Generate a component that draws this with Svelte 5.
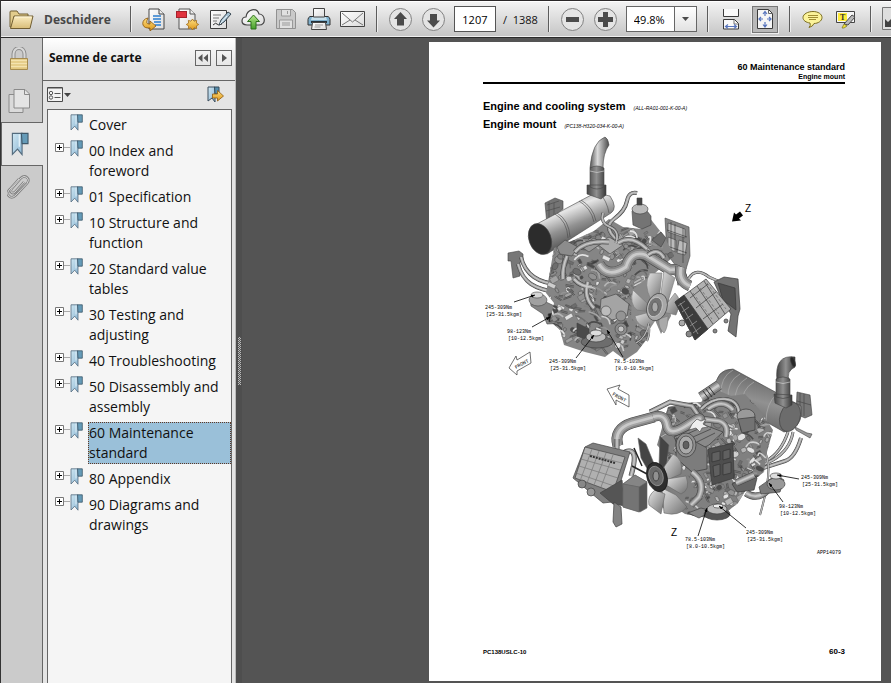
<script lang="ts">
  let currentPage = $state('1207');
  let zoomLevel = $state('49.8%');
  let selected = $state('60 Maintenance standard');

  const bookmarks = [
    { title: 'Cover', leaf: true },
    { title: '00 Index and foreword' },
    { title: '01 Specification' },
    { title: '10 Structure and function' },
    { title: '20 Standard value tables' },
    { title: '30 Testing and adjusting' },
    { title: '40 Troubleshooting' },
    { title: '50 Disassembly and assembly' },
    { title: '60 Maintenance standard' },
    { title: '80 Appendix' },
    { title: '90 Diagrams and drawings' }
  ];

  // Torque callouts: text position, then the leader line
  const callouts = [
    { x: 485, y: 309, nm: '245-309Nm', kgm: '[25-31.5kgm]', line: [514, 302, 535, 295] },
    { x: 507, y: 333, nm: '98-123Nm', kgm: '[10-12.5kgm]', line: [532, 327, 550, 317] },
    { x: 549, y: 363, nm: '245-309Nm', kgm: '[25-31.5kgm]', line: [576, 358, 594, 335] },
    { x: 614, y: 363, nm: '78.5-103Nm', kgm: '[8.0-10.5kgm]', line: [623, 357, 607, 330] },
    { x: 801, y: 479, nm: '245-309Nm', kgm: '[25-31.5kgm]', line: [799, 479, 777, 475] },
    { x: 779, y: 508, nm: '98-123Nm', kgm: '[10-12.5kgm]', line: [783, 502, 769, 483] },
    { x: 746, y: 534, nm: '245-309Nm', kgm: '[25-31.5kgm]', line: [746, 528, 719, 506] },
    { x: 685, y: 541, nm: '78.5-103Nm', kgm: '[8.0-10.5kgm]', line: [698, 536, 707, 508] }
  ];

  // Small castings, pipes and bolts that fill an engine block.
  // Seeded so that the drawing is the same on every load.
  function makeParts(seed: number, x0: number, y0: number, w: number, h: number, count: number) {
    const rnd = () => {
      seed = (seed * 16807) % 2147483647;
      return seed / 2147483647;
    };
    const tones = ['#4c4c4c', '#6d6d6d', '#808080', '#929292', '#a3a3a3', '#b5b5b5', '#cecece', '#e2e2e2'];
    return Array.from({ length: count }, () => ({
      kind: Math.floor(rnd() * 4),
      x: x0 + rnd() * w,
      y: y0 + rnd() * h,
      a: 2 + rnd() * 7,
      b: 1 + rnd() * 5,
      turn: rnd() > 0.5 ? 25 : -30,
      fill: tones[Math.floor(rnd() * tones.length)]
    }));
  }

  const upperParts = makeParts(4127, 546, 230, 128, 118, 400);
  const lowerParts = makeParts(9731, 660, 398, 112, 120, 360);
</script>

{#snippet bookmarkIcon(width: number, height: number)}
  <svg {width} {height} viewBox="0 0 13 17">
    <path d="M1 .8h7v15.4l-3.3-4L1 16z" fill="url(#bookmarkBlue)" stroke="#536b7d" stroke-width=".8" />
    <path d="M7.5.8h4.8v7.4H8z" fill="#659bb8" stroke="#3e586a" stroke-width=".8" />
    <path d="M6 1.500v9" stroke="#e0f0f8" />
  </svg>
{/snippet}

{#snippet engineParts(parts: ReturnType<typeof makeParts>)}
  {#each parts as p}
    <g transform="translate({p.x} {p.y}) rotate({p.turn})">
      {#if p.kind === 0}
        <rect width={p.a} height={p.b} fill={p.fill} stroke="#555" stroke-width=".4" />
      {:else if p.kind === 1}
        <ellipse rx={p.a / 2} ry={p.b / 1.6} fill={p.fill} stroke="#4c4c4c" stroke-width=".5" />
      {:else if p.kind === 2}
        <path d="M0 0q{p.a} {-p.b} {p.a * 1.6} {p.b}" fill="none" stroke={p.fill} stroke-width="1.6" />
      {:else}
        <path d="M0 0l{p.a} {p.b}M1 -1l{p.a} {p.b}" stroke="#3a3a3a" stroke-width=".5" />
      {/if}
    </g>
  {/each}
{/snippet}

{#snippet pipe(d: string, size: number)}
  <path {d} fill="none" stroke="#444" stroke-width={size} />
  <path {d} fill="none" stroke="#858585" stroke-width={size - 1} />
  <path {d} fill="none" stroke="#a5a5a5" stroke-width={size / 1.8} />
  <path {d} fill="none" stroke="#cacaca" stroke-width={size / 4} />
{/snippet}

<!-- Shared gradients -->
<svg class="defs" width="0" height="0" aria-hidden="true">
  <defs>
    <linearGradient id="bookmarkBlue" x2="1" y2="1">
      <stop offset="0" stop-color="#cfe7f2" /><stop offset="1" stop-color="#8db7d4" />
    </linearGradient>
    <linearGradient id="manila" x2="0" y2="1">
      <stop offset="0" stop-color="#fbedc1" /><stop offset="1" stop-color="#d8bd78" />
    </linearGradient>
    <linearGradient id="paper" x2="1" y2="1">
      <stop offset="0" stop-color="#fff" /><stop offset="1" stop-color="#dcdcdc" />
    </linearGradient>
    <linearGradient id="gold" x2="0" y2="1">
      <stop offset="0" stop-color="#ffdf80" /><stop offset="1" stop-color="#dc9618" />
    </linearGradient>
    <linearGradient id="leaf" x2="0" y2="1">
      <stop offset="0" stop-color="#b4e889" /><stop offset="1" stop-color="#45a02a" />
    </linearGradient>
  </defs>
</svg>

<div class="app">
  <header class="toolbar">
    <button class="open">
      <svg width="25" height="21" viewBox="0 0 25 21">
        <path d="M1 18V3q0-1 1-1h6l2 3h9v13z" fill="#e2cc8c" stroke="#715e32" />
        <path d="M1.500 19.500L5 7h19l-3 12.500z" fill="url(#manila)" stroke="#715e32" />
        <path d="M6 8h16.500" stroke="#fff7d8" />
      </svg>
      <span>Deschidere</span>
    </button>
    <span class="sep"></span>

    <div class="group">
      <button class="tool" aria-label="Export">
        <svg width="24" height="24" viewBox="0 0 24 24">
          <path d="M7 2h10l5 5v15H7z" fill="url(#paper)" stroke="#444" />
          <path d="M17 2v5h5" fill="#eee" stroke="#444" />
          <path d="M11 9h8M11 12h8M12 15h7M13 18h6" stroke="#2d7fd0" stroke-width="1.300" />
          <path d="M6 11C-1 12-1 21 6 21h2v3l6-5-6-5v3H7q-4 0-1-6z" fill="url(#gold)" stroke="#89560f" stroke-width=".8" />
        </svg>
      </button>
      <button class="tool" aria-label="Create PDF">
        <svg width="24" height="24" viewBox="0 0 24 24">
          <path d="M4 2h11l5 5v15H4z" fill="url(#paper)" stroke="#555" />
          <path d="M15 2v5h5" fill="#eee" stroke="#555" />
          <rect x="1.500" y="4.500" width="10" height="6" fill="#e0323e" stroke="#a5222c" />
          <path d="M17.500 12l1.500 2.200 2.600-.8-.2 2.700 2.300 1.400-2.300 1.400.2 2.700-2.600-.8-1.500 2.200-1.500-2.200-2.600.8.2-2.700-2.300-1.400 2.300-1.400-.2-2.700 2.600.8z" fill="url(#gold)" stroke="#a16b17" stroke-width=".8" />
        </svg>
      </button>
      <button class="tool" aria-label="Sign">
        <svg width="24" height="24" viewBox="0 0 24 24">
          <path d="M2.500 3.500h16v18h-16z" fill="url(#paper)" stroke="#3d3d3d" />
          <path d="M5 8h8M5 11h6M5 14h4" stroke="#777" />
          <path d="M5 18q3-3 4-1t5 0" fill="none" stroke="#333" />
          <path d="M11 18l2-5 7-8 3 2-7 8z" fill="#a9c4d5" stroke="#384853" />
          <path d="M12 17l7-8" stroke="#edf6fb" />
        </svg>
      </button>
      <button class="tool" aria-label="Upload">
        <svg width="25" height="24" viewBox="0 0 25 24">
          <path d="M6 18C-1 18 0 10 5 10 6 2 16 0 18 7c6 0 8 11 0 11z" fill="url(#paper)" stroke="#444" stroke-width="1.200" />
          <path d="M12.500 8l6 6.500h-3.500V22h-5v-7.500H6.500z" fill="url(#leaf)" stroke="#2c6e1c" />
        </svg>
      </button>
      <button class="tool" aria-label="Save" disabled>
        <svg width="22" height="24" viewBox="0 0 22 24">
          <path d="M1.500 2.500h16l3 3v16h-19z" fill="#c9c9c9" stroke="#919191" />
          <path d="M6.500 3v6h9V3M4.500 21v-8h13v8" fill="#e0e0e0" stroke="#999" />
          <path d="M12.500 4v3M7 16h8M7 18h8" stroke="#999" />
        </svg>
      </button>
      <button class="tool" aria-label="Print">
        <svg width="24" height="24" viewBox="0 0 24 24">
          <path d="M3 9.500h18q2 1 2 3V18H1v-5.500q0-2 2-3z" fill="#7fb0cd" stroke="#333" />
          <path d="M5 10h14l1 3H4z" fill="#c6dfeb" />
          <path d="M6.500 1.500h11V10h-11z" fill="url(#paper)" stroke="#444" />
          <path d="M4 14h16v2H4z" fill="#26323a" />
          <path d="M5.500 15.500h13l1 7h-15z" fill="url(#paper)" stroke="#444" />
          <path d="M8 18h8M7.500 20h6" stroke="#999" />
        </svg>
      </button>
      <button class="tool" aria-label="E-mail">
        <svg width="25" height="24" viewBox="0 0 25 24">
          <path d="M.500 4.500h24v15H.500z" fill="url(#paper)" stroke="#444" />
          <path d="M2 6l10.500 9L23 6M2 18l8-5M23 18l-8-5" fill="none" stroke="#777" />
        </svg>
      </button>
    </div>
    <span class="sep"></span>

    <div class="group">
      <button class="tool" aria-label="Previous page">
        <svg width="25" height="25" viewBox="0 0 25 25">
          <circle cx="12.500" cy="12.500" r="11" fill="#e4e4e4" stroke="#828282" />
          <path d="M12.500 5l6.500 7h-3v6.500H9V12H6z" fill="#4b4b4b" />
        </svg>
      </button>
      <button class="tool" aria-label="Next page">
        <svg width="25" height="25" viewBox="0 0 25 25">
          <circle cx="12.500" cy="12.500" r="11" fill="#e4e4e4" stroke="#828282" />
          <path d="M12.500 20.500L6 13.500h3V7h7v6.500h3z" fill="#4b4b4b" />
        </svg>
      </button>
      <input class="page-no" type="text" aria-label="Page" bind:value={currentPage} />
      <span class="page-total">/&nbsp; 1388</span>
    </div>
    <span class="sep"></span>

    <div class="group">
      <button class="tool" aria-label="Zoom out">
        <svg width="25" height="25" viewBox="0 0 25 25">
          <circle cx="12.500" cy="12.500" r="11" fill="#e4e4e4" stroke="#828282" />
          <path d="M6 10h13v5H6z" fill="#4b4b4b" />
        </svg>
      </button>
      <button class="tool" aria-label="Zoom in">
        <svg width="25" height="25" viewBox="0 0 25 25">
          <circle cx="12.500" cy="12.500" r="11" fill="#e4e4e4" stroke="#828282" />
          <path d="M5 10h5V5h5v5h5v5h-5v5h-5v-5H5z" fill="#4b4b4b" />
        </svg>
      </button>
      <label class="zoom">
        <select aria-label="Zoom level" bind:value={zoomLevel}>
          <option>49.8%</option>
          <option>75%</option>
          <option>100%</option>
        </select>
        <svg width="22" height="24" viewBox="0 0 22 24">
          <path d="M.500 0v24" stroke="#666" />
          <path d="M8 10h7l-3.500 4z" fill="#4b4b4b" />
        </svg>
      </label>
    </div>
    <span class="sep"></span>

    <div class="group">
      <button class="tool" aria-label="Fit width">
        <svg width="20" height="22" viewBox="0 0 20 22">
          <path d="M2.500 1v7.500h15V1M2.500 21V11.500h11l4 4V21z" fill="#fafafa" stroke="#3b3b3b" />
          <path d="M13 12v4h4" fill="none" stroke="#777" />
          <path d="M5 18.500h10M7 16.500l-2.500 2 2.500 2M13 16.500l2.500 2-2.500 2" fill="none" stroke="#5875bd" stroke-width="1.200" />
        </svg>
      </button>
      <button class="tool pressed" aria-label="Fit page">
        <svg width="20" height="22" viewBox="0 0 20 22">
          <path d="M2.500 1.500h11l4 4v15h-15z" fill="#f5f5f5" stroke="#3b3b3b" />
          <path d="M13.500 2v3.500h4" fill="none" stroke="#666" />
          <path d="M4 11h4M12 11h4M10 3.500v4.500M10 14v5M6 9l-2 2 2 2M14 9l2 2-2 2M8 6l2-2.500L12 6M8 16.500l2 2.500 2-2.500" fill="none" stroke="#5875bd" stroke-width="1.200" />
        </svg>
      </button>
    </div>
    <span class="sep"></span>

    <div class="group">
      <button class="tool" aria-label="Comment">
        <svg width="22" height="22" viewBox="0 0 22 22">
          <path d="M11 3.500c5 0 9 2.500 9 6s-4 6-8 6q-1 3-5 4 2-2 1-4.500c-4-.5-7-2.500-7-5.500 0-3.500 5-6 10-6z" fill="#fbf39a" stroke="#7b6d20" />
          <path d="M6 7.500h10M6 9.500h10M7 11.500h7" stroke="#a18e33" />
        </svg>
      </button>
      <button class="tool" aria-label="Highlight text">
        <svg width="22" height="22" viewBox="0 0 22 22">
          <path d="M1.500 3.500h18v11h-18z" fill="#f5f5f5" stroke="#444" />
          <path d="M3 5h9v8H3z" fill="#ffec3b" />
          <text class="mark" x="5" y="12">T</text>
          <path d="M9 16l8-9 3 2-7 8z" fill="#b8b8b8" stroke="#4a4a4a" />
          <path d="M7 20l2-4 3 2-3 2z" fill="#f5e339" stroke="#77701c" stroke-width=".7" />
        </svg>
      </button>
    </div>
    <span class="sep"></span>
    <button class="tool full" aria-label="Full screen">
      <svg width="30" height="24" viewBox="0 0 30 24">
        <path d="M.500.500h29v22H.500z" fill="#dedede" stroke="#777" />
        <path d="M3 20v-8l3 3 3-3 3 3-3 3 3 2z" fill="#424242" />
        <path d="M13 10l4-5h7v7" fill="none" stroke="#424242" stroke-width="2" />
      </svg>
    </button>
  </header>

  <div class="workspace">
    <nav class="rail" aria-label="Panels">
      <button aria-label="Security">
        <svg width="20" height="24" viewBox="0 0 20 24">
          <path d="M4.500 12V7a5.500 6 0 0 1 11 0v5" fill="none" stroke="#8e8e8e" stroke-width="4" />
          <path d="M4.500 12V7a5.500 6 0 0 1 11 0v5" fill="none" stroke="#d8d8d8" stroke-width="2" />
          <path d="M1.500 11.500h17v11h-17z" fill="#e2c77f" stroke="#a58b50" />
          <path d="M2 13.500h16M2 16.500h16M2 19.500h16" stroke="#f4e3af" stroke-width="1.500" />
        </svg>
      </button>
      <button aria-label="Page thumbnails">
        <svg width="22" height="24" viewBox="0 0 22 24">
          <path d="M1 5.500h14v18H1z" fill="#dadada" stroke="#8a8a8a" />
          <path d="M6 .500h11l4.500 4.500v14H6z" fill="#e4e4e4" stroke="#8a8a8a" />
          <path d="M16.500 1v4.500h5" fill="none" stroke="#8a8a8a" />
        </svg>
      </button>
      <button class="active" aria-label="Bookmarks">
        {@render bookmarkIcon(18, 24)}
      </button>
      <button aria-label="Attachments">
        <svg width="24" height="26" viewBox="0 0 24 26">
          <path d="M17 8L8 18q-2 2-3.500.5t0-3.500L14 4q3-3 6-.5t0 6L9 21q-4 4-7 1t1-7l9-10" fill="none" stroke="#848484" stroke-width="2.600" />
          <path d="M17 8L8 18q-2 2-3.500.5t0-3.500L14 4q3-3 6-.5t0 6L9 21q-4 4-7 1t1-7l9-10" fill="none" stroke="#d5d5d5" stroke-width="1" />
        </svg>
      </button>
    </nav>

    <aside class="panel">
      <div class="panel-head">
        <h2>Semne de carte</h2>
        <button aria-label="Collapse panel">
          <svg width="10" height="8" viewBox="0 0 10 8"><path d="M4.500 0v8L0 4zM10 0v8L5.500 4z" fill="#555" /></svg>
        </button>
        <button aria-label="Expand panel">
          <svg width="10" height="8" viewBox="0 0 10 8"><path d="M3 0v8l5-4z" fill="#555" /></svg>
        </button>
      </div>
      <div class="panel-tools">
        <button aria-label="Options">
          <svg width="24" height="15" viewBox="0 0 24 15">
            <path d="M.500.500h15v14H.500z" fill="#f2f2f2" stroke="#4b4b4b" />
            <path d="M1 1.500h14" stroke="#a0a0a0" />
            <circle cx="4" cy="6" r="1.700" fill="none" stroke="#555" />
            <circle cx="4" cy="10.500" r="1.700" fill="none" stroke="#555" />
            <path d="M7.500 6.500h6M7.500 10.500h6" stroke="#555" />
            <path d="M17 6h7l-3.500 4z" fill="#444" />
          </svg>
        </button>
        <button aria-label="Find current bookmark">
          <svg width="17" height="17" viewBox="0 0 17 17">
            <path d="M1 1h7v15l-3-4-4 3z" fill="url(#bookmarkBlue)" stroke="#3d4f5e" />
            <path d="M7.500 1H12v7H8z" fill="#568dab" stroke="#344b5b" />
            <path d="M5.500 8h5V4.500l6 5.500-6 5v-3h-5z" fill="url(#gold)" stroke="#8e5a10" stroke-width=".8" />
          </svg>
        </button>
      </div>
      <ul class="tree">
        {#each bookmarks as item}
          <li>
            <span class="branch">
              {#if !item.leaf}
                <button class="expander" aria-label="Expand {item.title}">
                  <svg width="9" height="9" viewBox="0 0 9 9">
                    <path d="M.500.500h8v8h-8z" fill="#fff" stroke="#777" />
                    <path d="M2 4.500h5M4.500 2v5" stroke="#000" />
                  </svg>
                </button>
              {/if}
            </span>
            {@render bookmarkIcon(13, 17)}
            <button class="entry" class:selected={selected === item.title} onclick={() => (selected = item.title)}>
              {item.title}
            </button>
          </li>
        {/each}
      </ul>
    </aside>

    <div class="splitter"><span></span></div>

    <main class="viewer">
      <article class="page">
        <header>
          <p class="chapter">60 Maintenance standard</p>
          <p class="topic">Engine mount</p>
        </header>
        <h3>Engine and cooling system <small>(ALL-RA01-001-K-00-A)</small></h3>
        <h3>Engine mount <small>(PC138-H320-034-K-00-A)</small></h3>

        <svg class="figure" viewBox="483 133 362 426" role="img" aria-label="Engine mount, two views">
          <defs>
            <linearGradient id="drum" x1="0" y1="0" x2=".55" y2="1">
              <stop offset=".1" stop-color="#777" /><stop offset=".4" stop-color="#e6e6e6" />
              <stop offset=".62" stop-color="#929292" /><stop offset=".9" stop-color="#484848" />
            </linearGradient>
            <linearGradient id="drum2" x1=".65" y1="0" x2=".3" y2="1">
              <stop offset="0" stop-color="#5c5c5c" /><stop offset=".5" stop-color="#919191" />
              <stop offset="1" stop-color="#5b5b5b" />
            </linearGradient>
            <linearGradient id="tube">
              <stop offset="0" stop-color="#555" /><stop offset=".4" stop-color="#dadada" />
              <stop offset="1" stop-color="#4b4b4b" />
            </linearGradient>
            <linearGradient id="tube2">
              <stop offset="0" stop-color="#444" /><stop offset=".5" stop-color="#909090" />
              <stop offset="1" stop-color="#383838" />
            </linearGradient>
            <linearGradient id="blade" x2="1" y2="1">
              <stop offset="0" stop-color="#e4e4e4" /><stop offset="1" stop-color="#6f6f6f" />
            </linearGradient>
            <clipPath id="upperBody">
              <path d="M554 248l20-8 20-9 15-12 14 8 18 2 8-12 15 19 10 20-20 18-7 14-4 30 6 18-12 16-12 8-12-9-8 6-20-5-21-7-4-15-10-9 4-18-8-10 4-22z" />
            </clipPath>
            <clipPath id="lowerBody">
              <path d="M668 407l16-4 17-1 14-13 16 7 14-2 14 15 14 21-6 22-3 20-14 11-12 20-10 8-10 8-16-2-17-3-16-11-9-22 8-24-11-12z" />
            </clipPath>
            <marker id="tip" markerWidth="5" markerHeight="4" refX="5" refY="2" orient="auto">
              <path d="M0 0l5 2-5 2z" />
            </marker>
          </defs>

          <!-- Upper view: exhaust and muffler -->
          <g stroke="#464646" stroke-width=".6">
            <path d="M545 203l10-5 8 3v8l-4 3v9l-12 4z" fill="#747474" />
            <path d="M547 205l12-4M549 202v20M554 203v20M546 211l14-4" fill="none" />
            <path d="M535 225l60-32 15 3q8 12 1 17l-64 41q-24-3-12-29z" fill="url(#drum)" />
            <path d="M555 214q12 7 13 24M557 213q12 7 13 24M579 201q12 7 15 21M581 200q12 7 15 21M599 192q8 9 10 21" fill="none" />
            <ellipse cx="540" cy="239" rx="11" ry="16" transform="rotate(-20 540 239)" fill="#2c2c2c" />
            <path d="M605 137q-13 5-15 31h13q0-15 6-23-1-7-4-8z" fill="url(#tube)" />
            <path d="M590 168q7-4 14 0v19q-7 4-14 0zM587 185h19v10l-5 4-14-5z" fill="url(#tube2)" />
            <path d="M590 171q7 3 14 0" stroke="#ddd" fill="none" />
          </g>

          <!-- Upper view: brackets and mounts -->
          <g stroke="#444" stroke-width=".6">
            <path d="M508 253l11-2 4 3v8h-3v14l-7 2-2-17h-3z" fill="#777" />
            <path d="M530 298l16 4 21 10v11l-20 1-4-10-12-8z" fill="#858585" />
            <ellipse cx="538" cy="300" rx="9" ry="6" fill="#a1a1a1" />
            <ellipse cx="537" cy="295" rx="6" ry="3" fill="#d6d6d6" />
            <path d="M548 314l8-2v9l-7 1z" fill="#242424" />
            <path d="M665 218l24 9 1 29-4 13-10-3-9-12z" fill="#858585" />
            <path d="M668 223l17 6v9l-17-6zM668 237l8 3v12l-8-3zM679 240l8 3-2 12-8-2z" fill="#bbb" />
            <path d="M671 222v28M675 224v27M683 228v35M667 230l20 7M667 246l20 7" stroke="#333" fill="none" />
          </g>
          {@render pipe('M521 257q3 13 13 20t26 7', 4)}
          {@render pipe('M518 264q4 14 13 20t28 9', 4)}

          <!-- Upper view: engine block -->
          <path d="M554 248l20-8 20-9 15-12 14 8 18 2 8-12 15 19 10 20-20 18-7 14-4 30 6 18-12 16-12 8-12-9-8 6-20-5-21-7-4-15-10-9 4-18-8-10 4-22z" fill="#858585" />
          <g clip-path="url(#upperBody)">
            {@render engineParts(upperParts)}
          </g>
          <g stroke="#404040" stroke-width=".6">
            <path d="M632 211q6-7 15 0l4 5v9l-9 4-9-4z" fill="#747474" />
            <ellipse cx="640" cy="209" rx="8" ry="5" fill="#bbb" />
            <path d="M637 198h5v7h-5z" fill="#444" />
            <path d="M652 240l9-8 5 6-5 9z" fill="#6b6b6b" />
            <path d="M557 247l8-7 13 7-6 9-12-2z" fill="#8c8c8c" />
            <path d="M597 244l12-7 14 8-13 9z" fill="#ababab" />
            <path d="M580 246l14-8 8 5-13 9z" fill="#999" />
            <path d="M601 299l15-5 13 10-2 12-15 4-12-9z" fill="#a4a4a4" />
            <circle cx="606" cy="311" r="5" fill="#bcbcbc" />
            <circle cx="621" cy="316" r="5" fill="#949494" />
            <circle cx="621" cy="329" r="6" fill="#8b8b8b" />
            <circle cx="621" cy="329" r="3" fill="#c4c4c4" />
            <path d="M577 323l12 6v12l-12-5z" fill="#4a4a4a" />
          </g>
          {@render pipe('M637 193q-8-2-10 8t-13 18 2 20', 4)}
          {@render pipe('M575 252q10-12 34-10', 5)}
          {@render pipe('M603 213q-3 10 7 14t6 16', 3)}
          {@render pipe('M567 256q-5 12-4 23M588 282q-5 15 6 26M574 279q7 8 18 8', 5)}
          {@render pipe('M599 264q9 15 27 3 5-17 20-12l24 15q12-3 13 15', 11)}
          {@render pipe('M618 243q13-9 29 6M648 255q10-8 16 3', 5)}

          <!-- Upper view: fan -->
          <path d="M632 290l15-12 8 20 13-4 3 22-10 18-6-14-13 8-11-10z" fill="#8a8a8a" />
          <g stroke="#777" stroke-width=".6" fill="url(#blade)">
            <path d="M651 300q-8-16-1-27h12l-3 28z" />
            <path d="M660 300l4-29 11 7-8 27z" />
            <path d="M665 306l10-13q8 7 1 22l-13-3z" />
            <path d="M649 305l-16-15q-4 14 4 20l13 2z" />
            <path d="M650 312l-15 4q2 11 15 12l8-12z" />
            <path d="M659 319l9-3q0 12-4 17-6-5-5-14z" fill="#aaa" />
            <ellipse cx="657" cy="307" rx="10" ry="14" transform="rotate(18 657 307)" fill="#a8a8a8" stroke="#333" />
            <ellipse cx="655" cy="307" rx="7" ry="10" transform="rotate(18 655 307)" fill="#747474" stroke="#ddd" />
            <ellipse cx="655" cy="307" rx="3" ry="5" fill="#aaa" stroke="#444" />
          </g>
          {@render pipe('M649 323q-3 15-13 20M649 326q1 8-2 15', 2)}

          <!-- Upper view: cooler -->
          {@render pipe('M689 278q7-11 20-1l9 4', 3)}
          {@render pipe('M681 267q-3 14 9 19', 11)}
          <g stroke="#3a3a3a" stroke-width=".7">
            <path d="M714 282l10-5 14 2 2 30-2 7-2 21-8-6 3-17-9-14z" fill="#737373" />
            <path d="M718 283l17 5 1 22-13-10z" fill="#515151" />
            <path d="M675 302l31-23 25 30-36 31z" fill="#b1b1b1" />
            <path d="M675 302l9-7 24 34-13 11z" fill="#3c3c3c" />
            <path d="M680 303l18 31M678 306l7-5M682 312l7-5M686 319l7-5M690 326l7-5M693 333l8-6" stroke="#a4a4a4" />
            <path d="M690 291l23 33M697 286l22 33M704 281l21 33M690 298l18-14M696 308l20-16M703 319l20-15" />
            <path d="M693 293l19 26M700 288l19 26M707 283l19 26" stroke="#666" stroke-dasharray="3 2" />
            <circle cx="682" cy="323" r="3" fill="#aaa" /><circle cx="689" cy="334" r="3" fill="#888" />
            <circle cx="715" cy="331" r="2" fill="#888" /><circle cx="726" cy="321" r="2" fill="#888" />
          </g>
          <g stroke="#444" stroke-width=".7">
            <ellipse cx="597" cy="342" rx="16" ry="6" fill="#6d6d6d" />
            <ellipse cx="596" cy="337" rx="10" ry="5" fill="#bbb" />
            <ellipse cx="596" cy="333" rx="6" ry="3" fill="#ddd" />
          </g>

          <!-- Lower view: exhaust and muffler -->
          <g stroke="#404040" stroke-width=".6">
            <path d="M797 392l13 3 2 20-7 3-9-4z" fill="#777" />
            <path d="M800 393v22M804 394v22M797 401l14 4" fill="none" />
            <path d="M715 389q1-20 18-20l68 37q3 22-17 26l-65-37z" fill="url(#drum2)" />
            <path d="M733 370q-13 7-12 25M740 374q-13 7-12 25M747 378q-13 7-12 25M754 382q-13 7-12 25M777 394q-11 9-11 28" fill="none" stroke="#b5b5b5" />
            <ellipse cx="790" cy="417" rx="10" ry="15" transform="rotate(18 790 417)" fill="#6c6c6c" />
            <path d="M795 357q-21-3-18 24h12q-3-10 6-14z" fill="url(#tube2)" />
            <ellipse cx="793" cy="362" rx="2" ry="5" transform="rotate(-18 793 362)" fill="#282828" />
            <path d="M776 379q7-4 14 0v18q-7 3-14 0zM774 394l18 1v10l-6 3-11-5z" fill="url(#tube2)" />
            <path d="M776 382q7 3 14 0" stroke="#ddd" fill="none" />
            <path d="M795 427l12 6 5 1-2 4-14-8z" fill="#999" />
          </g>
          {@render pipe('M788 432q-7 21-22 29l-23 10M793 432q-3 18-20 28l-30 15', 3)}
          {@render pipe('M801 438q-6 20-16 23l-40 13', 4)}
          {@render pipe('M768 433q-6 10-1 25t-7 57', 2)}

          <!-- Lower view: engine block -->
          <path d="M668 407l16-4 17-1 14-13 16 7 14-2 14 15 14 21-6 22-3 20-14 11-12 20-10 8-10 8-16-2-17-3-16-11-9-22 8-24-11-12z" fill="#808080" />
          <g clip-path="url(#lowerBody)">
            {@render engineParts(lowerParts)}
          </g>
          {@render pipe('M701 397l18-12', 10)}
          <path d="M703 391l6 8M706 389l6 8M709 387l6 8" stroke="#333" />
          {@render pipe('M650 412l20-10 22 4 7 10', 5)}
          {@render pipe('M701 409q11-11 24-10t14 14', 4)}
          {@render pipe('M703 419l16 2q10 3 7 16M708 409q15-11 25 1', 6)}
          {@render pipe('M618 446q-5-17 14-23l22-6', 11)}
          {@render pipe('M653 417q12-4 14 8t19 1 13-6', 10)}
          <g stroke="#393939" stroke-width=".7">
            <path d="M674 437l28-13 21 8-14 13-25 13z" fill="#8a8a8a" />
            <path d="M678 438l27-12M684 441l27-12M691 445l24-12" fill="none" />
            <path d="M676 438l20 4 11 6v21l-15 3-16-14z" fill="#7c7c7c" />
            <ellipse cx="686" cy="445" rx="10" ry="12" fill="#909090" />
            <ellipse cx="686" cy="445" rx="7" ry="9" fill="#aaa" />
            <ellipse cx="686" cy="445" rx="3" ry="4" fill="#606060" />
            <path d="M692 424l5-5 4 2 5-2-3 5 5 3-6 1-2 4-4-4-7 2z" fill="#eee" stroke="#555" />
            <path d="M708 449l25-6 1 35-22 7z" fill="#4e4e4e" />
            <path d="M712 453l8-2v9l-8 2zM723 451l7-2v9l-7 2zM713 466l7-2v11l-6 2zM723 464l8-2v11l-8 2z" fill="#606060" stroke="#333" />
            <ellipse cx="746" cy="416" rx="9" ry="7" fill="#9a9a9a" />
            <path d="M738 419l17-2v13l-13 3z" fill="#737373" />
            <path d="M732 484l20-11 5 5-3 12-17 2z" fill="#666" />
          </g>
          {@render pipe('M692 472q14 10 7 25l-8 8', 7)}
          {@render pipe('M736 483l18-8M746 493q12 8 23-4', 7)}

          <!-- Lower view: cooler -->
          {@render pipe('M617 439v10M625 459q-3-9 5-8t1 25', 5)}
          <g stroke="#424242" stroke-width=".7">
            <path d="M585 447l8-4 37 9-11 35-7 15-9 1-30-25z" fill="#808080" />
            <path d="M585 447l40 10-12 35-38-14z" fill="#b0b0b0" />
            <path d="M583 453l39 10M581 459l39 11M579 466l39 12M576 473l38 13M592 449l-12 32M599 451l-12 32M606 453l-12 32M613 455l-12 32" fill="none" stroke="#777" />
            <path d="M590 456l25 7" stroke="#333" stroke-dasharray="2 1" stroke-width="2" />
            <circle cx="582" cy="484" r="4" fill="#888" /><circle cx="591" cy="492" r="4" fill="#999" />
            <path d="M600 493l22-13 3 26-12-2z" fill="#555" />
            <path d="M614 502l7 5 1 17-6 3-3-5z" fill="#838383" />
          </g>

          <!-- Lower view: fan -->
          <path d="M655 485l22-24 15 20-8 20-16 10-13-8z" fill="#808080" />
          <g stroke="#666" stroke-width=".6" fill="url(#blade)">
            <path d="M655 466l-9-22-8-6 3 20 8 14zM659 465l1-29 9 9-3 24z" fill="#444" />
            <path d="M664 467l9-13q11 5 8 20l-14 6z" />
            <path d="M667 479l19-3q5 14-5 18l-15-9z" />
            <path d="M662 488l14 7 11 12q-8 10-23 6z" />
            <path d="M655 490l10 4-4 20-12-9q-2-9 6-15z" />
            <ellipse cx="657" cy="477" rx="10" ry="15" transform="rotate(-18 657 477)" fill="#2e2e2e" stroke="#111" />
            <ellipse cx="656" cy="476" rx="7" ry="10" transform="rotate(-18 656 476)" fill="#696969" stroke="#aaa" />
            <ellipse cx="656" cy="476" rx="3" ry="5" fill="#909090" stroke="#222" />
            <path d="M623 484l12-9 12 7v26l-7 4-17-5z" fill="#565656" />
            <path d="M623 484l12-9 12 7-8 5z" fill="#858585" />
            <path d="M623 484l16 3v25l-16-5z" fill="#747474" />
          </g>
          <path d="M634 448l8 18M632 466l15 8" stroke="#262626" stroke-width="1.500" />

          <!-- Lower view: mounts -->
          <g stroke="#444" stroke-width=".7">
            <path d="M688 513l13-5 11 3-13 7z" fill="#888" />
            <ellipse cx="717" cy="514" rx="13" ry="6" fill="#555" />
            <ellipse cx="717" cy="509" rx="10" ry="5" fill="#bbb" />
            <ellipse cx="718" cy="506" rx="5" ry="2" fill="#eee" />
            <path d="M759 487l17-12 8 5-4 12-19 2z" fill="#7b7b7b" />
            <ellipse cx="776" cy="484" rx="9" ry="6" fill="#999" />
            <ellipse cx="776" cy="476" rx="6" ry="3" fill="#ddd" />
          </g>

          <!-- Callouts -->
          {#each callouts as c}
            <path d="M{c.line[0]} {c.line[1]}L{c.line[2]} {c.line[3]}" stroke="#000" stroke-width=".8" marker-end="url(#tip)" />
            <text class="torque" x={c.x} y={c.y}>{c.nm}</text>
            <text class="torque" x={c.x + 1} y={c.y + 7}>{c.kgm}</text>
          {/each}
          <text class="view" x="745" y="212">Z</text>
          <text class="view" x="671" y="536">Z</text>
          <path d="M732 221.500l2-9 2 2 4-3 3 4-4 3 2 2z" />
          <text class="torque" x="817" y="554">APP14079</text>
          <g fill="#fff" stroke="#333" stroke-width=".7">
            <path d="M509 368l7-12 1 4 13-8 1 11-14 8v4z" />
            <path d="M607 389l13-4-2 4 11 6v12l-13-7v5z" />
          </g>
          <text class="torque" transform="translate(516 369) rotate(-29)">FRONT</text>
          <text class="torque" transform="translate(612 395) rotate(29)">FRONT</text>
        </svg>

        <footer>
          <span>PC138USLC-10</span>
          <strong>60-3</strong>
        </footer>
      </article>
    </main>
  </div>
</div>

<style>
  :global(body) {
    margin: 0;
    background: #535353;
    font-family: 'Open Sans', 'Noto Sans', sans-serif;
  }

  * { box-sizing: border-box; }

  button {
    padding: 0;
    border: 0;
    background: none;
    color: inherit;
    font: inherit;
  }
  svg { display: block; flex: none; }
  .defs { position: absolute; }

  .app {
    display: flex;
    flex-direction: column;
    height: 100vh;
    overflow: hidden;
    border-left: 1px solid #333;
  }

  /* --- Toolbar --- */
  .toolbar {
    display: flex;
    align-items: center;
    flex: none;
    height: 38px;
    overflow: hidden;
    border-top: 1px solid #2a2728;
    border-bottom: 1px solid #2a2a2a;
    background: linear-gradient(#f4f4f4, #c4c4c4);
    box-shadow: inset 0 1px #fff, inset 0 -1px #eee;
    font-size: 11px;
    color: #111;
  }
  .group { display: flex; align-items: center; flex: none; }
  .sep {
    flex: none;
    width: 1px;
    height: 26px;
    margin: 0 7px;
    background: #5c5c5c;
    box-shadow: 1px 0 #eee;
  }
  .open {
    display: flex;
    align-items: center;
    flex: none;
    gap: 10px;
    padding: 0 12px 0 8px;
    font-size: 12px;
    font-weight: 700;
    color: #484848;
  }
  .tool {
    display: flex;
    align-items: center;
    justify-content: center;
    flex: none;
    width: 33px;
    height: 28px;
  }
  .pressed {
    width: 26px;
    height: 27px;
    margin: 0 4px;
    border: 1px solid #777;
    background: #b9b9b9;
    box-shadow: 0 0 0 1px #eee;
  }
  .full { justify-content: flex-start; margin-left: 4px; }
  .page-no {
    width: 42px;
    height: 26px;
    margin: 0 7px 0 4px;
    padding: 0;
    border: 1px solid #555;
    background: #fff;
    font: inherit;
    text-align: center;
  }
  .page-total { padding-right: 3px; white-space: nowrap; }
  .zoom {
    display: flex;
    position: relative;
    width: 71px;
    height: 26px;
    margin: 0 3px 0 4px;
    border: 1px solid #666;
    background: #fff;
  }
  .zoom select {
    width: 100%;
    padding: 0 24px 0 7px;
    border: 0;
    background: none;
    appearance: none;
    font: inherit;
  }
  .zoom svg {
    position: absolute;
    top: 0;
    right: 0;
    background: linear-gradient(#fff, #e2e2e2);
    pointer-events: none;
  }
  .mark { font: bold 8px 'Liberation Serif', serif; fill: #333; }

  /* --- Side panels --- */
  .workspace { display: flex; flex: 1; min-height: 0; }
  .rail {
    display: flex;
    flex-direction: column;
    flex: none;
    width: 42px;
    border-right: 1px solid #666;
    background: #cbcbcb;
  }
  .rail button {
    display: flex;
    align-items: center;
    justify-content: center;
    height: 42px;
    padding-right: 6px;
  }
  .rail .active {
    height: 44px;
    margin-right: -1px;
    border: 1px solid #666;
    border-right: 0;
    background: #e4e4e4;
  }

  .panel {
    display: flex;
    flex-direction: column;
    flex: none;
    width: 193px;
    border-right: 1px solid #bbb;
    background: #e4e4e4;
  }
  .panel-head {
    display: flex;
    align-items: center;
    gap: 5px;
    height: 43px;
    padding: 0 3px 3px 6px;
    border-bottom: 1px solid #666;
    background: linear-gradient(#fff, #e4e4e4 70%);
  }
  h2 { flex: 1; margin: 0; font-size: 12px; font-weight: 700; color: #111; white-space: nowrap; }
  .panel-head button {
    display: flex;
    align-items: center;
    justify-content: center;
    width: 16px;
    height: 16px;
    border: 1px solid #666;
  }
  .panel-tools {
    display: flex;
    align-items: center;
    justify-content: space-between;
    height: 28px;
    padding: 0 11px 2px 4px;
  }
  .tree {
    flex: 1;
    margin: 0 3px 0 4px;
    padding: 4px 0 0;
    border: 1px solid #666;
    border-bottom: 0;
    background: #f5f5f5;
    list-style: none;
  }
  .tree li {
    display: flex;
    align-items: flex-start;
    margin-bottom: 4px;
    padding-left: 7px;
  }
  .branch { width: 15px; height: 15px; }
  .expander {
    display: flex;
    align-items: center;
    width: 15px;
    height: 15px;
    background: linear-gradient(#aaa, #aaa) 0 7px / 15px 1px no-repeat;
  }
  .entry {
    flex: 1;
    margin-left: 5px;
    border: 1px solid transparent;
    font-size: 14px;
    line-height: 20px;
    text-align: left;
    color: #111;
  }
  .entry.selected { border: 1px dotted #5f3825; background: #9ac0d9; }

  .splitter {
    display: flex;
    align-items: center;
    justify-content: center;
    flex: none;
    width: 6px;
    background: #4e4e4e;
  }
  .splitter span {
    width: 3px;
    height: 48px;
    background: repeating-conic-gradient(#bbb 0 25%, #555 0 50%) 0 0 / 2px 2px;
  }

  /* --- Document --- */
  .viewer {
    display: flex;
    justify-content: flex-end;
    flex: 1;
    min-width: 0;
    padding: 4px 10px 2px;
    background: #545454;
  }
  .page {
    display: flex;
    flex-direction: column;
    width: 100%;
    max-width: 452px;
    padding: 19px 36px 22px 54px;
    background: #fff;
    font-family: 'Liberation Sans', Arial, sans-serif;
    color: #000;
  }
  .page header {
    padding-bottom: 2px;
    border-bottom: 2px solid #000;
    margin-bottom: 13px;
    font-weight: 700;
    text-align: right;
  }
  p { margin: 0; }
  .chapter { font-size: 9px; line-height: 12px; }
  .topic { font-size: 7px; line-height: 7px; }
  h3 { margin: 0; font-size: 11px; line-height: 18px; }
  small { margin-left: 5px; font-size: 5px; font-style: italic; font-weight: 400; line-height: 5px; }
  .figure { width: 100%; }
  .torque { font: 5px 'Liberation Mono', monospace; }
  .view { font: 10px 'Liberation Sans', sans-serif; }
  .page footer {
    display: flex;
    align-items: center;
    justify-content: space-between;
    margin-top: auto;
    font-size: 6px;
    font-weight: 700;
  }
  strong { font-size: 8px; line-height: 14px; }
</style>
